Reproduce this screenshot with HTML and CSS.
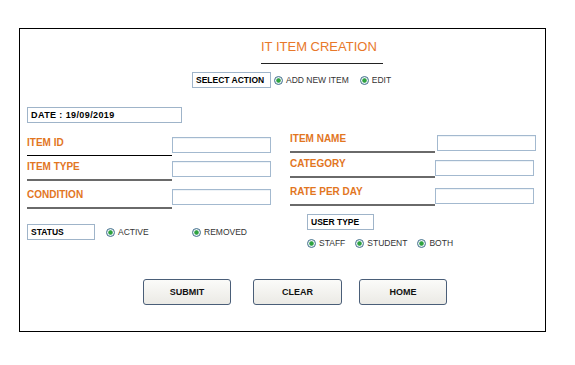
FILE: index.html
```html
<!DOCTYPE html>
<html lang="en">
<head>
    <meta charset="UTF-8">
    <title>IT Item Creation</title>
    <link rel="stylesheet" href="styles.css">
</head>
<body>

<div class="frame">
    <div class="title">IT ITEM CREATION</div>

    <div class="action-row">
        <div class="tag tag-action">SELECT ACTION</div>
        <label class="opt opt-add"><span class="radio"></span>ADD NEW ITEM</label>
        <label class="opt"><span class="radio"></span>EDIT</label>
    </div>

    <div class="tag tag-date">DATE : 19/09/2019</div>

    <div class="fields">
        <div class="col col-left">
            <div class="field"><div class="field-label first">ITEM ID</div><div class="field-input"></div></div>
            <div class="field"><div class="field-label">ITEM TYPE</div><div class="field-input"></div></div>
            <div class="field field-wide"><div class="field-label">CONDITION</div><div class="field-input"></div></div>
        </div>
        <div class="col col-right">
            <div class="field"><div class="field-label">ITEM NAME</div><div class="field-input shifted"></div></div>
            <div class="field"><div class="field-label">CATEGORY</div><div class="field-input"></div></div>
            <div class="field field-wide"><div class="field-label">RATE PER DAY</div><div class="field-input"></div></div>
        </div>
    </div>

    <div class="choices">
        <div class="status">
            <div class="tag tag-status">STATUS</div>
            <label class="opt opt-active"><span class="radio"></span>ACTIVE</label>
            <label class="opt"><span class="radio"></span>REMOVED</label>
        </div>
        <div class="user-type">
            <div class="tag tag-user">USER TYPE</div>
            <div class="user-opts">
                <label class="opt"><span class="radio"></span>STAFF</label>
                <label class="opt"><span class="radio"></span>STUDENT</label>
                <label class="opt"><span class="radio"></span>BOTH</label>
            </div>
        </div>
    </div>

    <div class="buttons">
        <button>SUBMIT</button>
        <button class="btn-clear">CLEAR</button>
        <button>HOME</button>
    </div>
</div>

</body>
</html>
```

FILE: styles.css
```css
body { margin: 0; background: #fff; font-family: "Liberation Sans", Arial, sans-serif; color: #111; }
.frame { box-sizing: border-box; width: 527px; height: 304px; margin: 28px 0 0 19px; border: 1px solid #000; }

.title { width: 122px; margin: 10px 0 0 241px; padding-bottom: 9px; border-bottom: 1px solid #222; font-size: 13px; line-height: 15px; color: #e8782a; white-space: nowrap; }

.tag { box-sizing: border-box; height: 16px; border: 1px solid #9fb4c9; padding-left: 3px; font-size: 8.5px; font-weight: bold; line-height: 14px; color: #000; white-space: nowrap; }
.action-row { display: flex; align-items: center; margin: 8px 0 0 172px; }
.tag-action { width: 79px; }
.tag-date { width: 155px; margin: 19px 0 0 7px; font-size: 9px; letter-spacing: 0.4px; }
.tag-status { width: 68px; }
.tag-user { width: 67px; }

.opt { display: flex; align-items: center; font-size: 8.5px; color: #333; white-space: nowrap; }
.radio { box-sizing: border-box; width: 9px; height: 9px; margin-right: 3px; border: 1px solid #42708c; border-radius: 50%; background: radial-gradient(circle, #2ea33f 0, #2ea33f 1.8px, #e8f0f3 2.6px); }
.action-row .opt { margin-left: 3px; }
.action-row .opt-add { margin-right: 8px; }

.fields { display: flex; gap: 19px; margin: 10px 0 0 7px; }
.col { display: flex; flex-direction: column; }
.col-left { padding-top: 4px; width: 244px; }
.col-right { width: 246px; }
.field { display: flex; align-items: flex-start; }
.field + .field { margin-top: 5px; }
.field-wide + .field, .field + .field-wide { margin-top: 8px; }
.field-label { width: 145px; height: 18px; border-bottom: 2px solid #6a6a6a; font-size: 10px; font-weight: bold; line-height: 12px; color: #e2761f; }
.field-label.first { border-bottom: 1px solid #000; }
.field-input { box-sizing: border-box; width: 99px; height: 16px; border: 1px solid #a3b9cf; box-shadow: inset 0 1px 0 #eef3f7; }
.col-right .field-input { margin-top: 2px; }
.col-right .field-input.shifted { margin-left: 2px; }

.choices { display: flex; align-items: flex-start; margin: 5px 0 0 7px; }
.status { display: flex; align-items: center; width: 280px; margin-top: 10px; }
.status .opt-active { width: 86px; margin-left: 11px; }
.user-opts { display: flex; gap: 10px; margin-top: 8px; }

.buttons { display: flex; gap: 17px; margin: 31px 0 0 123px; }
.btn-clear { margin-left: 5px; width: 89px; }
button { box-sizing: border-box; width: 88px; height: 26px; padding: 0; border: 1px solid #4a5e78; border-radius: 3px; background: linear-gradient(#fbfbf9, #ebeae5); font-family: "Liberation Sans", Arial, sans-serif; font-size: 9px; font-weight: bold; color: #111; cursor: pointer; }
```
